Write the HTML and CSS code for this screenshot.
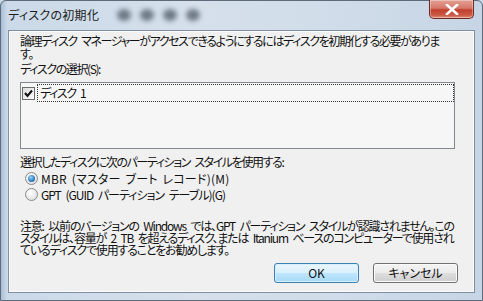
FILE: index.html
```html
<!DOCTYPE html>
<html lang="ja">
<head>
<meta charset="utf-8">
<title>ディスクの初期化</title>
<link rel="stylesheet" href="styles.css">
</head>
<body>
<div class="window">
  <div class="titlebar">
    <span class="title">ディスクの初期化</span>
    <span class="blurs"><i></i><i></i><i></i><i></i></span>
    <span class="close">
      <svg width="14" height="11" viewBox="0 0 14 11"><path d="M2 1 L12 10 M12 1 L2 10" stroke="#fff" stroke-width="2.6" stroke-linecap="square" fill="none"/></svg>
    </span>
  </div>
  <div class="client">
    <p class="intro">論理ディスク マネージャーがアクセスできるようにするにはディスクを初期化する必要がありま<br>す。</p>
    <p class="label">ディスクの選択(S):</p>
    <div class="listbox">
      <div class="item">
        <span class="checkbox">
          <svg width="11" height="11" viewBox="0 0 11 11"><path d="M2 5 L4.5 8 L9 2.5" stroke="#111" stroke-width="2" fill="none"/></svg>
        </span>
        <span class="itemtext">ディスク 1</span>
      </div>
    </div>
    <p class="label2">選択したディスクに次のパーティション スタイルを使用する:</p>
    <div class="radios">
      <div class="radio-row mbr"><span class="radio on"><span class="dot"></span></span><span>MBR (マスター ブート レコード)(M)</span></div>
      <div class="radio-row gpt"><span class="radio"></span><span>GPT (GUID パーティション テーブル)(G)</span></div>
    </div>
    <p class="note">注意: 以前のバージョンの Windows では、GPT パーティション スタイルが認識されません。この<br>スタイルは、容量が 2 TB を超えるディスク、または Itanium ベースのコンピューターで使用され<br>ているディスクで使用することをお勧めします。</p>
    <div class="buttons">
      <span class="btn default">OK</span>
      <span class="btn">キャンセル</span>
    </div>
  </div>
</div>
</body>
</html>
```

FILE: styles.css
```css
* { box-sizing: border-box; }
html, body { margin: 0; padding: 0; }
body {
  width: 483px;
  height: 301px;
  overflow: hidden;
  background: #c9d7e6;
  font-family: "Noto Sans CJK JP", "Liberation Sans", sans-serif;
  font-size: 12px;
  color: #111;
}
.window {
  width: 483px;
  height: 301px;
  display: flex;
  flex-direction: column;
  border: 1px solid #5d6b7b;
  border-radius: 6px 6px 0 0;
  background: linear-gradient(to right, #a9bfd6 0px, #cbd9e8 6px, #d5e0eb 40%, #d0dce9 70%, #c6d5e5 100%);
}
.titlebar {
  height: 29px;
  display: flex;
  align-items: flex-start;
  padding-left: 7px;
  flex-shrink: 0;
}
.title {
  margin-top: 5px;
  font-size: 12px;
  line-height: 17px;
  color: #1b1b1b;
  font-feature-settings: "palt";
  letter-spacing: 0.3px;
}
.blurs {
  display: flex;
  gap: 9px;
  margin-left: 18px;
  margin-top: 8px;
}
.blurs i {
  width: 14px;
  height: 12px;
  border-radius: 50%;
  background: #6f7a87;
  filter: blur(2.5px);
}
.close {
  margin-left: auto;
  margin-right: 8px;
  margin-top: -1px;
  width: 45px;
  height: 19px;
  border: 1px solid #6b2a24;
  border-top: none;
  border-radius: 0 0 5px 5px;
  background: linear-gradient(to bottom, #e3a093 0%, #d6786a 45%, #c13f2d 55%, #cc5a45 85%, #e2937e 100%);
  box-shadow: inset 0 0 0 1px rgba(255, 255, 255, 0.35);
  display: flex;
  align-items: center;
  justify-content: center;
}
.client {
  flex: 1;
  margin: 0 7px 7px 7px;
  border: 1px solid #7f8ea1;
  background: #f0f0f0;
  box-shadow: inset 0 0 0 1px #fbfbfb;
  padding: 3px 0 0 11px;
  display: flex;
  flex-direction: column;
  font-feature-settings: "palt";
  letter-spacing: -1.4px;
  word-spacing: 3px;
}
p { margin: 0; }
.intro { line-height: 13px; white-space: nowrap; }
.label { line-height: 13px; margin-top: 2px; }
.listbox {
  margin-top: 7px;
  width: 435px;
  height: 67px;
  border: 1px solid #828790;
  background: #f6f6f6;
  padding: 1px 0 0 1px;
}
.item {
  display: flex;
  align-items: center;
  height: 18px;
}
.checkbox {
  width: 13px;
  height: 13px;
  border: 1px solid #6d6d6d;
  background: linear-gradient(135deg, #dcdcdc, #fdfdfd);
  display: flex;
  align-items: center;
  justify-content: center;
  flex-shrink: 0;
}
.itemtext {
  margin-left: 2px;
  flex: 1;
  height: 18px;
  line-height: 16px;
  border: 1px dotted #333;
  padding-left: 2px;
}
.label2 { margin-top: 6px; line-height: 13px; }
.radios {
  margin-top: 4px;
  padding-left: 5px;
  display: flex;
  flex-direction: column;
  gap: 3px;
}
.radio-row {
  display: flex;
  align-items: center;
  gap: 3px;
  height: 13px;
  line-height: 13px;
  white-space: nowrap;
}
.radio-row.mbr { letter-spacing: 0.2px; word-spacing: 2px; }
.radio-row.gpt { letter-spacing: -1px; word-spacing: 3px; }
.radio {
  width: 13px;
  height: 13px;
  border-radius: 50%;
  border: 1px solid #8a8a8a;
  background: radial-gradient(circle at 40% 35%, #ffffff, #d8d8d8);
  display: flex;
  align-items: center;
  justify-content: center;
  flex-shrink: 0;
}
.radio .dot {
  width: 7px;
  height: 7px;
  border-radius: 50%;
  background: radial-gradient(circle at 40% 35%, #9ad4f6, #1f6fb6 70%, #17508a);
}
.note {
  margin-top: 19px;
  line-height: 12px;
  white-space: nowrap;
  letter-spacing: -1.2px;
  word-spacing: 3px;
}
.buttons {
  display: flex;
  justify-content: flex-end;
  gap: 14px;
  margin-top: auto;
  margin-bottom: 9px;
  padding-right: 16px;
  letter-spacing: 0;
  word-spacing: 0;
}
.btn {
  width: 85px;
  height: 20px;
  border: 1px solid #707070;
  border-radius: 3px;
  background: linear-gradient(to bottom, #f4f4f4 0%, #ebebeb 48%, #dddddd 52%, #cfcfcf 100%);
  box-shadow: inset 0 0 0 1px #fcfcfc;
  display: flex;
  align-items: center;
  justify-content: center;
  font-size: 12px;
  line-height: 14px;
}
.btn.default {
  border-color: #3c7fb1;
  background: linear-gradient(to bottom, #eaf6fd 0%, #d9f0fc 48%, #bee6fd 52%, #a7d9f5 100%);
  box-shadow: inset 0 0 0 1px #d8f0fc;
}
```
